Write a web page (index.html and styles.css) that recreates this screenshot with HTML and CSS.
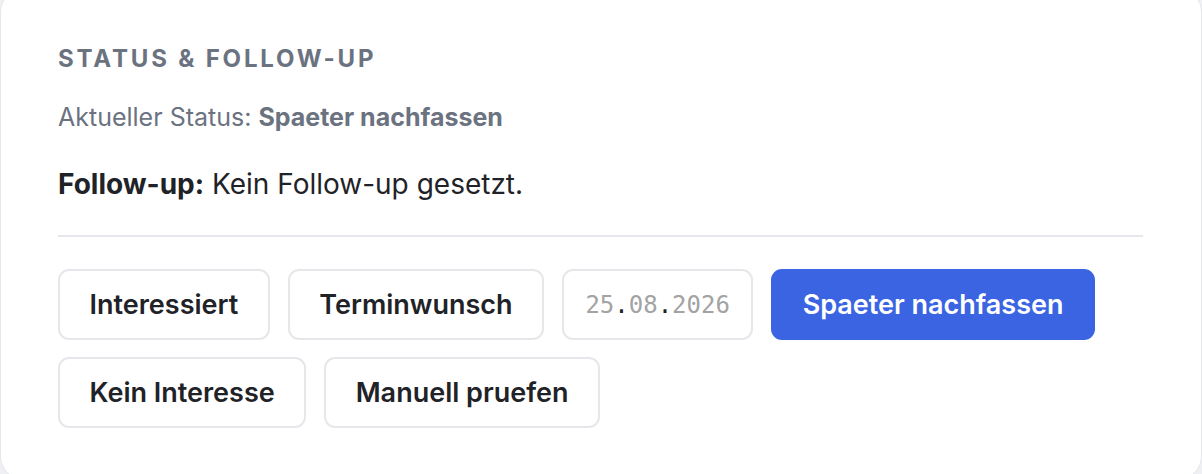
FILE: index.html
```html
<!DOCTYPE html>
<html lang="de">
<head>
<meta charset="utf-8">
<title>Status &amp; Follow-up</title>
<link rel="stylesheet" href="styles.css">
</head>
<body>
<section class="card">
  <h2 class="title">STATUS &amp; FOLLOW-UP</h2>
  <p class="status">Aktueller Status: <strong>Spaeter nachfassen</strong></p>
  <p class="followup"><strong>Follow-up:</strong> Kein Follow-up gesetzt.</p>
  <hr class="divider">
  <div class="actions">
    <button class="btn">Interessiert</button>
    <button class="btn">Terminwunsch</button>
    <div class="date"><span class="seg">25</span><span class="dot">.</span><span class="seg">08</span><span class="dot">.</span><span class="seg">2026</span></div>
    <button class="btn btn-primary">Spaeter nachfassen</button>
    <button class="btn">Kein Interesse</button>
    <button class="btn">Manuell pruefen</button>
  </div>
</section>
</body>
</html>
```

FILE: styles.css
```css
html, body {
  margin: 0;
  padding: 0;
}
body {
  background: #eef0f3;
  font-family: Inter, "Noto Sans", sans-serif;
  overflow: hidden;
}
.card {
  box-sizing: border-box;
  margin-top: -12px;
  height: 492px;
  background: #ffffff;
  border: 1px solid #e5e7eb;
  border-radius: 24px;
  padding: 55px 58px 0 57px;
}
.title {
  margin: 0;
  font-size: 24px;
  line-height: 30px;
  font-weight: 700;
  letter-spacing: 0.118em;
  color: #6b7280;
}
.status {
  margin: 27px 0 0;
  font-size: 25px;
  line-height: 32px;
  color: #6b7280;
}
.status strong {
  font-weight: 700;
  color: #6b7280;
}
.followup {
  margin: 34px 0 0;
  font-size: 28px;
  line-height: 34px;
  color: #1f2328;
}
.followup strong {
  font-weight: 700;
  color: #1f2328;
}
.divider {
  margin: 34px 0 0;
  border: 0;
  height: 2px;
  background: #e5e7eb;
}
.actions {
  margin-top: 32px;
  display: flex;
  flex-wrap: wrap;
  gap: 17px 18px;
  max-width: 1060px;
}
.btn {
  box-sizing: border-box;
  height: 71px;
  padding: 0 29.5px;
  background: #ffffff;
  border: 2px solid #e5e7eb;
  border-radius: 11px;
  font-family: Inter, "Noto Sans", sans-serif;
  font-size: 27px;
  font-weight: 600;
  color: #1f2328;
  cursor: pointer;
}
.btn-primary {
  background: #3b64e2;
  border-color: #3b64e2;
  color: #ffffff;
}
.date {
  box-sizing: border-box;
  height: 71px;
  width: 191px;
  display: flex;
  align-items: center;
  justify-content: center;
  border: 2px solid #e5e7eb;
  border-radius: 11px;
  font-family: "DejaVu Sans Mono", "Liberation Mono", monospace;
  font-size: 24px;
  color: #a3a3a3;
}
.date .dot {
  color: #1f2328;
}
```
